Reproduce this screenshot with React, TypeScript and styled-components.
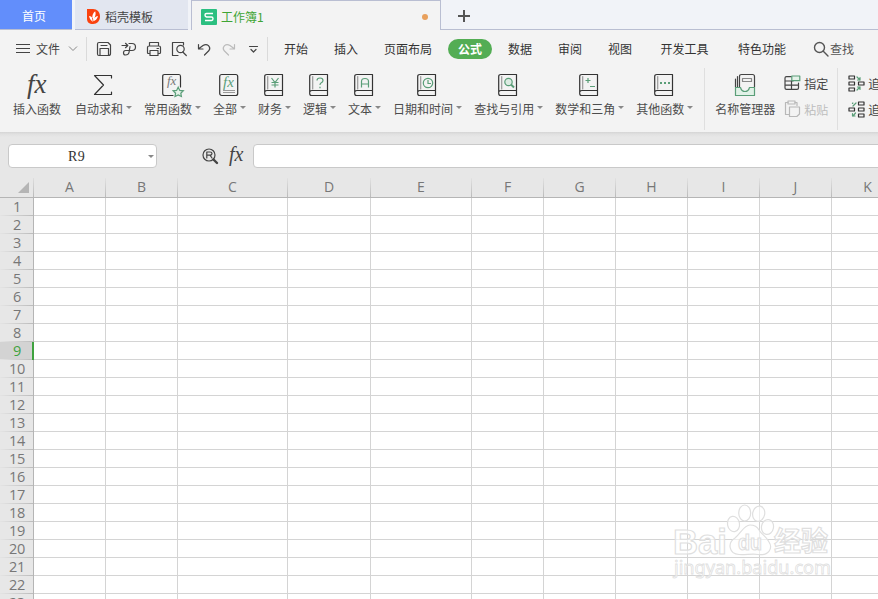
import React from "react";
import styled, { createGlobalStyle, css } from "styled-components";

const GlobalStyle = createGlobalStyle`
  *, *::before, *::after { box-sizing: border-box; }
  html, body { margin: 0; padding: 0; overflow: hidden; }
  body { font-family: "Noto Sans CJK SC", sans-serif; font-size: 12px; color: #444; background: #fff; }
  svg text { user-select: none; }
`;

const Window = styled.div`
  width: 878px;
  height: 599px;
  overflow: hidden;
  display: flex;
  flex-direction: column;
  background: #f3f3f3;
  white-space: nowrap;
`;

/* ---------- tab strip ---------- */
const TabStrip = styled.div`
  flex: none;
  height: 30px;
  display: flex;
  background: #f1f3f8;
`;
const HomeTab = styled.div`
  width: 72px;
  padding-right: 4px;
  line-height: 31px;
  text-align: center;
  color: #fff;
  background: #628efb;
  border-bottom: 1px solid #b9bed2;
`;
const TemplateTab = styled.div`
  width: 119px;
  display: flex;
  align-items: center;
  gap: 5px;
  padding: 3px 0 0 12px;
  background: #e2e6f0;
  border: solid #f1f3f8;
  border-width: 0 3px;
  box-shadow: inset 0 -1px #b9bed2;
  line-height: 18px;
`;
const ActiveTab = styled.div`
  width: 250px;
  display: flex;
  align-items: center;
  gap: 4px;
  padding: 2px 12px 0 9px;
  background: #f3f3f3;
  border: solid #b9bed2;
  border-width: 1px 1px 0 1px;
  color: #3fa535;
`;
const UnsavedDot = styled.span`
  width: 6px;
  height: 6px;
  margin: 0 0 0 auto;
  border-radius: 50%;
  background: #e8a05c;
`;
const TabRest = styled.div`
  flex: 1;
  padding: 9px 0 0 16px;
  border-bottom: 1px solid #b9bed2;
`;

/* ---------- menu row ---------- */
const MenuRow = styled.div`
  flex: none;
  height: 37px;
  display: flex;
  align-items: center;
  padding-left: 16px;
`;
const FileMenu = styled.div`
  width: 70px;
  display: flex;
  align-items: center;
  gap: 6px;
`;
const MenuChevron = styled.svg`
  margin-left: 2px;
`;
const QuickTools = styled.div`
  width: 182px;
  height: 24px;
  display: flex;
  align-items: center;
  gap: 9px;
  padding-left: 9px;
  border: solid #dadada;
  border-width: 0 1px;
`;
const MenuItem = styled.div<{ $width?: number; $active?: boolean }>`
  width: ${(p) => p.$width ?? 50}px;
  text-align: center;
  color: #333;
  ${(p) =>
    p.$active &&
    css`
      width: 44px;
      height: 20px;
      margin: 0 3px;
      line-height: 19px;
      border-radius: 10px;
      color: #fff;
      font-weight: 700;
      background: #53ad54;
    `}
`;
const Menus = styled.div`
  display: flex;
  align-items: center;
  padding-left: 3px;
`;
const Search = styled.div`
  display: flex;
  align-items: center;
  gap: 1px;
  margin-left: 13px;
  color: #555;
`;

/* ---------- ribbon ---------- */
const Ribbon = styled.div`
  flex: none;
  height: 65px;
  display: flex;
  padding-left: 13px;
`;
const Tool = styled.div`
  flex: none;
  display: flex;
  flex-direction: column;
  align-items: center;
  gap: 4px;
  margin-right: 14px;
  padding-top: 6px;
`;
const ToolLabel = styled.div`
  display: flex;
  align-items: center;
  line-height: 16px;
  color: #4c4c4c;
`;
const Caret = styled.i`
  flex: none;
  width: 6px;
  margin: -3px -2px 0 3px;
  border: 3px solid transparent;
  border-top-color: #888;
  border-bottom: 0;
`;
const Divider = styled.div<{ $left?: number }>`
  flex: none;
  width: 1px;
  height: 62px;
  margin: 1px 0 0 ${(p) => p.$left ?? 0}px;
  background: #dfdfdf;
`;
const ManagerSlot = styled.div`
  display: flex;
  margin-left: 10px;
  margin-right: -5px;
`;
const Stack = styled.div`
  flex: none;
  display: flex;
  flex-direction: column;
  gap: 8px;
  padding-top: 7px;
`;
const StackItem = styled.div<{ $muted?: boolean }>`
  display: flex;
  align-items: center;
  height: 18px;
  gap: 3px;
  color: ${(p) => (p.$muted ? "#bdbdbd" : "#444")};
`;

/* ---------- formula bar ---------- */
const FormulaBar = styled.div`
  flex: none;
  height: 46px;
  display: flex;
  padding: 12px 0 0 8px;
  background: linear-gradient(#d5d5d5, #e0e0e0 2px, #e7e7e7 5px);
`;
const NameBox = styled.div`
  width: 149px;
  height: 24px;
  display: flex;
  align-items: center;
  padding: 2px 2px 0 59px;
  border: 1px solid #c9c9c9;
  border-radius: 4px;
  background: #fff;
  font: 14px "Liberation Serif", serif;
  letter-spacing: 0.5px;
  color: #333;
`;
const NameCaret = styled.i`
  margin: -2px 0 0 auto;
  border: 3px solid transparent;
  border-top-color: #888;
  border-bottom: 0;
`;
const FormulaTools = styled.div`
  width: 96px;
  display: flex;
  align-items: flex-start;
  gap: 6px;
  padding: 4px 0 0 45px;
`;
const FormulaInput = styled.div`
  flex: 1;
  height: 24px;
  margin-right: -6px;
  border: 1px solid #c9c9c9;
  border-radius: 4px;
  background: #fff;
`;

/* ---------- sheet ---------- */
const Sheet = styled.div`
  flex: none;
  position: relative;
  font-family: "Open Sans", "Noto Sans", sans-serif;
  font-size: 14px;
  color: #777;
`;
const HeaderRow = styled.div`
  display: flex;
  height: 20px;
  background: #e7e7e7;
  border-bottom: 1px solid #b5b5b5;
`;
const Corner = styled.div`
  flex: none;
  width: 34px;
  padding: 4px 0 0 18px;
  border-right: 1px solid;
  border-image: linear-gradient(#e0e0e0, #b8b8b8) 1;
  line-height: 0;
`;
const ColumnHead = styled.div<{ $width: number }>`
  flex: none;
  width: ${(p) => p.$width}px;
  line-height: 18px;
  text-align: center;
  border-right: 1px solid;
  border-image: linear-gradient(#e4e4e4, #b8b8b8) 1;
`;
const Row = styled.div`
  display: flex;
  height: 18px;
`;
const RowHead = styled.div<{ $active: boolean }>`
  flex: none;
  width: 34px;
  padding-left: ${(p) => (p.$active ? 2 : 1)}px;
  line-height: 18px;
  font-size: 14.5px;
  letter-spacing: -0.2px;
  text-align: center;
  color: ${(p) => (p.$active ? "#3fa23f" : "#777")};
  background:
    linear-gradient(90deg, #e4e4e4, #bcbcbc) bottom / 100% 1px no-repeat,
    ${(p) => (p.$active ? "#d3d3d3" : "#e7e7e7")};
  border-right: ${(p) => (p.$active ? "2px solid #3fa23f" : "1px solid #b5b5b5")};
`;
const Cell = styled.div<{ $width: number }>`
  flex: none;
  width: ${(p) => p.$width}px;
  background: #fff;
  border: solid #d4d4d4;
  border-width: 0 1px 1px 0;
`;
const Watermark = styled.svg`
  position: absolute;
  left: 668px;
  top: 322px;
  pointer-events: none;
`;

/* ---------- icons ---------- */
const Icon = styled.svg`
  flex: none;
  overflow: visible;
`;
const line = { fill: "none", stroke: "#444", strokeWidth: 1.2, strokeLinecap: "round", strokeLinejoin: "round" } as const;
const green = "#5a9e78";

const FxText = ({ x, y, size, color }: { x: number; y: number; size: number; color: string }) => (
  <text x={x} y={y} fontSize={size} fill={color} fontFamily="Liberation Serif, serif" fontStyle="italic">fx</text>
);

const Book = ({ children }: { children: React.ReactNode }) => (
  <Icon width="20" height="24">
    <g {...line}>
      <path d="M3 1.5H18.5V22.5H2.5Q.7 22.5.7 20.5V3.5Q.7 1.5 3 1.5M1 18.5Q1.5 17.5 3 17.5H18.5" stroke="#333" />
      <path d="M3.7 3.5V16" stroke="#999" />
    </g>
    <g fill="none" stroke={green} strokeWidth="1.2">{children}</g>
  </Icon>
);

const bookMarks: Record<string, React.ReactNode> = {
  "财务": <path d="M7.5 5L11 9.5L14.5 5M11 9.5V14.5M7.5 9.5H14.5M7.5 12H14.5" />,
  "逻辑": <path d="M8 7.5Q8 5 11 5Q14 5 14 7.5Q14 9 12 10Q11 10.5 11 12M11 13.8V15.3" />,
  "文本": <path d="M7.5 14.5V8.5Q7.5 5.5 11 5.5Q14.5 5.5 14.5 8.5V14.5M7.5 11H14.5" />,
  "日期和时间": <><circle cx="11" cy="10" r="4.7" /><path d="M11 7V10.5H14" /></>,
  "查找与引用": <><circle cx="10.5" cy="9" r="3.7" fill="#dcebe2" /><path d="M13 11.5L16 14.5" strokeWidth="2" /></>,
  "数学和三角": <path d="M6.5 7.5H11.5M9 5V10M11 13.5H16" />,
  "其他函数": <path d="M6 10H8M10 10H12M14 10H16" strokeWidth="2" />,
};

const toolIcon = (name: string) => {
  if (name === "插入函数")
    return <Icon width="28" height="24"><FxText x={4} y={19.5} size={27} color="#444" /></Icon>;
  if (name === "自动求和")
    return <Icon width="20" height="24"><path {...line} stroke="#333" d="M18.5 5V2.5H1.5L10.5 12L1.5 21.5H18.5V19" /></Icon>;
  if (name === "常用函数")
    return (
      <Icon width="20" height="24">
        <path {...line} stroke="#333" d="M11 22.5H2.5Q.7 22.5.7 20.5V3.5Q.7 1.5 2.5 1.5H17Q18.5 1.5 18.5 3.5V14" />
        <FxText x={5} y={11.5} size={13} color="#777" />
        <path d="M16.2 14.2L17.8 17.4L21.3 17.8L18.8 20.2L19.4 23.5L16.2 21.9L13 23.5L13.6 20.2L11.1 17.8L14.6 17.4Z" fill="#e4f1e8" stroke={green} strokeWidth="1.2" />
      </Icon>
    );
  if (name === "全部")
    return (
      <Icon width="20" height="24">
        <rect {...line} stroke="#333" x=".7" y="1.5" width="18" height="21" rx="2" />
        <FxText x={4} y={13.5} size={15} color={green} />
        <path d="M4 17.5H16M4 19.5H16" stroke="#999" />
      </Icon>
    );
  if (name === "名称管理器")
    return (
      <Icon width="22" height="24">
        <g {...line}>
          <path d="M5.5 14V3.5Q5.5 1.5 7.5 1.5H18.5Q20.5 1.5 20.5 3.5V14M3.5 3.5V14M1.5 6V14" />
          <rect x="8.5" y="5.5" width="9" height="3" stroke="#888" />
          <path d="M1.5 14.5H6.5Q7.5 18.5 11 18.5Q14.5 18.5 15.5 14.5H20.5V22.5H1.5Z" fill="#e1f1e7" stroke={green} />
        </g>
      </Icon>
    );
  return <Book>{bookMarks[name]}</Book>;
};

const SaveIcon = () => (
  <Icon width="16" height="16"><g {...line}><path d="M3 1.5H12L14.5 4V12.5Q14.5 14.5 12.5 14.5H3Q1.5 14.5 1.5 13V3Q1.5 1.5 3 1.5" /><path d="M4 14V7.5H12.5V14M5 4.5H11" /></g></Icon>
);
const ExportIcon = () => (
  <Icon width="16" height="16"><g {...line}><path d="M1 4.5H6.5M4.5 2.3L6.8 4.5L4.5 6.7" /><path d="M8 2.5H11Q14.5 2.5 14.5 6Q14.5 9.5 11 9.5H4.5Q2.5 9.5 2.5 11.7Q2.5 14 4.5 14Q7.5 14 8 11.5L9 5.5" /></g></Icon>
);
const PrintIcon = () => (
  <Icon width="16" height="16"><g {...line}><path d="M3.5 5V1.5H12.5V5M3.5 12.5H2.5Q1.5 12.5 1.5 11.5V6.5Q1.5 5 3 5H13Q14.5 5 14.5 6.5V11.5Q14.5 12.5 13.5 12.5H12.5M11 7.5H12.5" /><rect x="4" y="9.5" width="8" height="5" /></g></Icon>
);
const PreviewIcon = () => (
  <Icon width="16" height="16"><g {...line}><path d="M7 14.5H1.5V1.5H12.5V4M11.8 11L15.3 14.5" /><circle cx="9.5" cy="8" r="3.7" /></g></Icon>
);
const UndoIcon = ({ redo }: { redo?: boolean }) => (
  <Icon width="16" height="16"><g {...line} stroke={redo ? "#bbb" : "#444"} transform={redo ? "translate(15 0) scale(-1 1)" : "translate(1 0)"}><path d="M1.5 3.5V8H6M1.7 7.8L6 4.6Q9 2.5 11.5 4.6Q13.8 7 12 9.5L7.5 14" /></g></Icon>
);
const MoreIcon = () => <Icon width="14" height="16"><path {...line} d="M3.5 5.5H11.5M5 8.5L7.5 11L10 8.5" /></Icon>;

const SpecifyIcon = () => (
  <Icon width="17" height="16"><g {...line}><path d="M8 1.7H2.5Q1 1.7 1 3V13Q1 14.3 2.5 14.3H13Q14.5 14.3 14.5 13V8M1 6H9M1 10.2H14.5M7.5 5.5V14" /><rect x="7.8" y="1" width="8" height="4.7" stroke={green} fill="#e4f1e8" /></g></Icon>
);
const PasteIcon = () => (
  <Icon width="17" height="18"><g {...line} stroke="#b8b8b8"><path d="M4 2.5H1.5V14.5H5M11 2.5H13V5.5" /><rect x="4" y="1" width="7" height="3" /><path d="M5.5 7H15.5V14L12.8 16.5H5.5Z" fill="#f3f3f3" /></g></Icon>
);
const TraceIcon = ({ dependents }: { dependents?: boolean }) => (
  <Icon width="17" height="17"><g {...line} stroke="#333" transform={dependents ? "translate(17 0) scale(-1 1)" : undefined}>
    <rect x="1" y="1" width="5.5" height="3" /><rect x="1" y="7" width="5.5" height="3" /><rect x="1" y="13" width="5.5" height="3" /><rect x="10.5" y="7" width="5.5" height="3" />
    <path d={dependents ? "M9 2L12 5M12 2H12.5V2.5M9.5 12L12 15M12.5 12.5V15H10" : "M9 2L12 5M9.5 5H12V2.5M9 15L12 12M9.5 12H12V14.5"} stroke={green} />
  </g></Icon>
);

/* ---------- content ---------- */
const columns: [string, number][] = [
  ["A", 72], ["B", 72], ["C", 110], ["D", 83], ["E", 101], ["F", 72],
  ["G", 72], ["H", 72], ["I", 72], ["J", 72], ["K", 72],
];
const menus: { label: string; width?: number; active?: boolean }[] = [
  { label: "开始" }, { label: "插入" }, { label: "页面布局", width: 74 }, { label: "公式", active: true },
  { label: "数据" }, { label: "审阅" }, { label: "视图" }, { label: "开发工具", width: 79 }, { label: "特色功能", width: 76 },
];
const tools = ["自动求和", "常用函数", "全部", "财务", "逻辑", "文本", "日期和时间", "查找与引用", "数学和三角", "其他函数"];

const ToolButton = ({ name, menu }: { name: string; menu?: boolean }) => (
  <Tool>
    {toolIcon(name)}
    <ToolLabel>{name}{menu && <Caret />}</ToolLabel>
  </Tool>
);

const BaiduMark = () => (
  <Watermark width="170" height="90" viewBox="668 500 170 90">
    <g fill="#fff" fillOpacity=".6" stroke="#dfdfdf" strokeWidth="1.2">
      <text x="673" y="553.5" fontFamily="Liberation Sans" fontWeight="700" fontSize="35" textLength="54" lengthAdjust="spacingAndGlyphs">Bai</text>
      <ellipse cx="733.5" cy="524" rx="6" ry="7.7" transform="rotate(-10 733.5 524)" />
      <ellipse cx="744.7" cy="513" rx="6" ry="8" />
      <ellipse cx="758.7" cy="513.7" rx="6" ry="7.7" transform="rotate(12 758.7 513.7)" />
      <ellipse cx="767.5" cy="527" rx="6" ry="7.5" transform="rotate(10 767.5 527)" />
      <path d="M750 525C744 525 741 533 735 538C727 543 729 554 739 554.5C745 555 753 553.5 758 554.5C769 556 773 548 769 542C766 536 762 535 759 530C757 526 754 525 750 525Z" />
      <text x="738" y="550" fontFamily="Liberation Sans" fontWeight="700" fontSize="22" textLength="24" lengthAdjust="spacingAndGlyphs">du</text>
      <text x="774" y="551" fontFamily="Noto Sans CJK SC" fontWeight="700" fontSize="27">经验</text>
      <text x="674" y="574" fontFamily="Noto Sans" fontSize="18" strokeWidth=".8" textLength="157" lengthAdjust="spacingAndGlyphs">jingyan.baidu.com</text>
    </g>
  </Watermark>
);

export default function App() {
  return (
    <Window>
      <GlobalStyle />
      <TabStrip>
        <HomeTab>首页</HomeTab>
        <TemplateTab>
          <Icon width="13" height="15"><path d="M0 0H6C10 0 13 3 13 7.5S10 15 6 15C2 15 0 13 0 10Z" fill="#fa420f" /><path d="M5.3 12.5C3.5 11 2.7 9.5 2 7C4 7.2 5 8.2 5.4 9.3C5 6 6.2 4 8.2 2.3C9.2 5 8.3 7.5 7.2 9.5C8 8 9.5 7.2 11 7C10.3 10 8.5 12 5.3 12.5Z" fill="#fff" /><path d="M5.4 9L6 12" stroke="#fa420f" strokeWidth=".8" /></Icon>
          稻壳模板
        </TemplateTab>
        <ActiveTab>
          <Icon width="16" height="16"><rect width="16" height="16" rx="1" fill="#2bbf80" /><path d="M12 4.5H5.5Q4 4.5 4 6T5.5 8H10.5Q12 8 12 9.7T10.5 11.5H4" fill="none" stroke="#fff" strokeWidth="1.4" /></Icon>
          工作簿1
          <UnsavedDot />
        </ActiveTab>
        <TabRest><Icon width="14" height="14"><path d="M7 1V13M1 7H13" stroke="#555" strokeWidth="2" /></Icon></TabRest>
      </TabStrip>

      <MenuRow>
        <FileMenu>
          <Icon width="14" height="12"><path d="M0 1.5H14M0 5.5H14M0 9.5H14" stroke="#444" /></Icon>
          文件
          <MenuChevron width="10" height="8"><path d="M1 1.5L5 5.5L9 1.5" fill="none" stroke="#888" /></MenuChevron>
        </FileMenu>
        <QuickTools>
          <SaveIcon /><ExportIcon /><PrintIcon /><PreviewIcon /><UndoIcon /><UndoIcon redo /><MoreIcon />
        </QuickTools>
        <Menus>
          {menus.map((m) => <MenuItem key={m.label} $width={m.width} $active={m.active}>{m.label}</MenuItem>)}
        </Menus>
        <Search>
          <Icon width="16" height="16"><g {...line} stroke="#555" strokeWidth="1.4"><circle cx="6.5" cy="6.5" r="5" /><path d="M10.3 10.3L15 15" /></g></Icon>
          查找
        </Search>
      </MenuRow>

      <Ribbon>
        <ToolButton name="插入函数" />
        {tools.map((name) => <ToolButton key={name} name={name} menu />)}
        <Divider $left={-1} />
        <ManagerSlot><ToolButton name="名称管理器" /></ManagerSlot>
        <Stack>
          <StackItem><SpecifyIcon />指定</StackItem>
          <StackItem $muted><PasteIcon />粘贴</StackItem>
        </Stack>
        <Divider $left={9} />
        <ManagerSlot as={Stack}>
          <StackItem><TraceIcon />追踪引用单元格</StackItem>
          <StackItem><TraceIcon dependents />追踪从属单元格</StackItem>
        </ManagerSlot>
      </Ribbon>

      <FormulaBar>
        <NameBox>R9<NameCaret /></NameBox>
        <FormulaTools>
          <Icon width="18" height="18"><g {...line} strokeWidth="1.2"><circle cx="7" cy="7" r="6" /><path d="M11.5 11.5L15 15" strokeWidth="2.4" /><path d="M4.8 10V4H8Q10 4 10 5.6T8 7.2H5M8 7.2L10 10" /></g></Icon>
          <Icon width="21" height="18"><FxText x={3} y={12.5} size={20} color="#444" /></Icon>
        </FormulaTools>
        <FormulaInput />
      </FormulaBar>

      <Sheet>
        <HeaderRow>
          <Corner><Icon width="11" height="11"><path d="M11 0V11H0Z" fill="#b5b5b5" /></Icon></Corner>
          {columns.map(([name, width]) => <ColumnHead key={name} $width={width}>{name}</ColumnHead>)}
        </HeaderRow>
        {Array.from({ length: 23 }, (_, i) => (
          <Row key={i}>
            <RowHead $active={i === 8}>{i + 1}</RowHead>
            {columns.map(([name, width]) => <Cell key={name} $width={width} />)}
          </Row>
        ))}
        <BaiduMark />
      </Sheet>
    </Window>
  );
}
